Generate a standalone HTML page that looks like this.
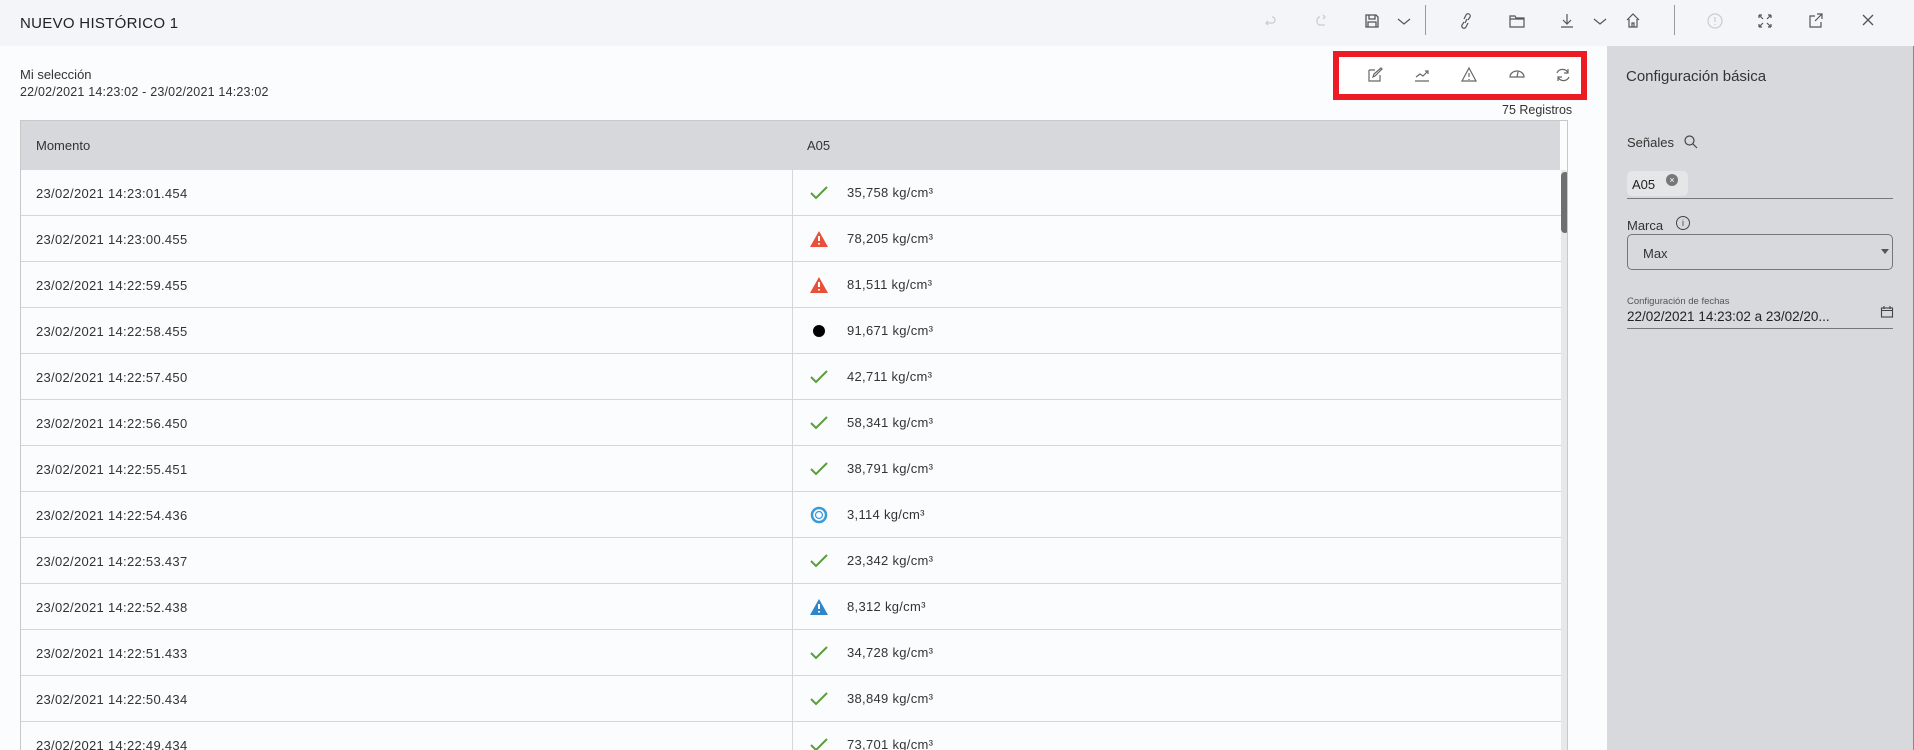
<!DOCTYPE html>
<html><head><meta charset="utf-8">
<style>
*{box-sizing:border-box;margin:0;padding:0}
html{width:1914px;height:750px;overflow:hidden}
body{width:1914px;height:750px;overflow:hidden;background:#fbfcfe;font-family:"Liberation Sans",sans-serif;color:#333;position:relative}
.hdr{position:absolute;left:0;top:0;width:1914px;height:46px;background:#f4f5f8}
.title{position:absolute;left:20px;top:15px;font-size:15px;color:#222;letter-spacing:.3px}
.ic{position:absolute;top:11px}
.sep{position:absolute;top:5px;width:1px;height:30px;background:#999}
.abs{position:absolute}
.right{position:absolute;left:1607px;top:46px;width:307px;height:704px;background:#d8d9dc;border-right:1px solid #888}
.red{position:absolute;left:1333px;top:51px;width:254px;height:49px;border:6px solid #ed1c24;background:#fff}
.tbl{position:absolute;left:20px;top:120px;width:1548px;height:630px;border:1px solid #c8c8c8;border-bottom:none;background:#fbfcfe;overflow:hidden}
.th{position:absolute;left:0;top:0;width:1540px;height:49px;background:#d7d8db}
.row{position:absolute;left:0;width:1540px;height:46px;border-bottom:1px solid #d6d6d8;font-size:13px;letter-spacing:.3px;color:#333}
.row .t{position:absolute;left:15px;top:16px}
.row .v{position:absolute;left:826px;top:15px}
.row .i{position:absolute;left:787px;top:12px;width:22px;height:22px}
.vl{position:absolute;left:771px;top:49px;width:1px;height:600px;background:#d6d6d8}
</style></head><body>
<div class="hdr">
<div class="title">NUEVO HISTÓRICO 1</div>
<svg class="ic" style="left:1262px" width="18" height="20" viewBox="0 0 18 20" fill="none" stroke="#ccc" stroke-width="1.3"><path d="M10 6 C14 6 14 12 10 12 H4 M6 10 L4 12 L6 14"/></svg>
<svg class="ic" style="left:1312px" width="18" height="20" viewBox="0 0 18 20" fill="none" stroke="#ccc" stroke-width="1.3"><path d="M8 6 C4 6 4 14 8 14 H13 M11 4 L13 6 L11 8"/></svg>
<svg class="ic" style="left:1363px" width="18" height="20" viewBox="0 0 18 20" fill="none" stroke="#555" stroke-width="1.3"><path d="M3 4 H13 L15 6 V16 H3 Z M6 4 V8 H12 V4 M5 16 V11 H13 V16"/></svg>
<svg class="ic" style="left:1396px" width="16" height="20" viewBox="0 0 16 20" fill="none" stroke="#555" stroke-width="1.2"><path d="M2 8 L8 13 L14 8"/></svg>
<div class="sep" style="left:1425px"></div>
<svg class="ic" style="left:1457px" width="18" height="20" viewBox="0 0 18 20" fill="none" stroke="#555" stroke-width="1.2"><path d="M7 11 L5 14 A2 2 0 0 0 9 16 L11 12 M11 9 L13 6 A2 2 0 0 0 9 4 L7 8 M8 12 L10 8"/></svg>
<svg class="ic" style="left:1508px" width="18" height="20" viewBox="0 0 18 20" fill="none" stroke="#555" stroke-width="1.2"><path d="M2 5 H7 L8 7 H16 V16 H2 Z M2 8 H16"/></svg>
<svg class="ic" style="left:1558px" width="18" height="20" viewBox="0 0 18 20" fill="none" stroke="#555" stroke-width="1.2"><path d="M9 3 V13 M5 9 L9 13 L13 9 M3 16 H15"/></svg>
<svg class="ic" style="left:1592px" width="16" height="20" viewBox="0 0 16 20" fill="none" stroke="#555" stroke-width="1.2"><path d="M2 8 L8 13 L14 8"/></svg>
<svg class="ic" style="left:1624px" width="18" height="20" viewBox="0 0 18 20" fill="none" stroke="#555" stroke-width="1.2"><path d="M3 9 L9 3 L15 9 M5 8 V16 H13 V8 M8 16 V12 H10 V16"/></svg>
<div class="sep" style="left:1674px"></div>
<svg class="ic" style="left:1706px" width="18" height="20" viewBox="0 0 18 20" fill="none" stroke="#ccc" stroke-width="1.2"><circle cx="9" cy="10" r="7"/><path d="M9 6 V11 M9 13 V14"/></svg>
<svg class="ic" style="left:1756px" width="18" height="20" viewBox="0 0 18 20" fill="none" stroke="#555" stroke-width="1.2"><path d="M3 4 L7 8 M3 4 H6 M3 4 V7 M15 4 L11 8 M15 4 H12 M15 4 V7 M3 16 L7 12 M3 16 H6 M3 16 V13 M15 16 L11 12 M15 16 H12 M15 16 V13"/></svg>
<svg class="ic" style="left:1807px" width="18" height="20" viewBox="0 0 18 20" fill="none" stroke="#555" stroke-width="1.2"><path d="M8 5 H3 V16 H14 V11 M10 3 H15 V8 M15 3 L8 10"/></svg>
<svg class="ic" style="left:1859px" width="18" height="20" viewBox="0 0 18 20" fill="none" stroke="#555" stroke-width="1.3"><path d="M4 4 L14 14 M14 4 L4 14"/></svg>
</div>

<div class="abs" style="left:20px;top:67px;font-size:13px;color:#333">Mi selección</div>
<div class="abs" style="left:20px;top:85px;font-size:12.5px;color:#333;letter-spacing:.2px">22/02/2021 14:23:02 - 23/02/2021 14:23:02</div>

<div class="red">
<svg class="abs" style="left:27px;top:9px" width="18" height="18" viewBox="0 0 18 18" fill="none" stroke="#666" stroke-width="1.2"><path d="M3 4 H9 M3 4 V15 H14 V9 M7 11 L8 8 L15 2 L16 3 L9 10 Z"/></svg>
<svg class="abs" style="left:74px;top:9px" width="18" height="18" viewBox="0 0 18 18" fill="none" stroke="#666" stroke-width="1.2"><path d="M3 11 L7 8 L10 10 L15 5 M12 5 H15 V8 M2 15 H16"/></svg>
<svg class="abs" style="left:121px;top:9px" width="18" height="18" viewBox="0 0 18 18" fill="none" stroke="#666" stroke-width="1.2"><path d="M9 2 L16 15 H2 Z M9 7 V11 M9 13 V14"/></svg>
<svg class="abs" style="left:169px;top:9px" width="18" height="18" viewBox="0 0 18 18" fill="none" stroke="#666" stroke-width="1.2"><path d="M2 11 A7 6 0 0 1 16 11 Z M9 11 L10 6"/></svg>
<svg class="abs" style="left:215px;top:9px" width="18" height="18" viewBox="0 0 18 18" fill="none" stroke="#666" stroke-width="1.2"><path d="M14 7 A6 6 0 0 0 3 7 M4 11 A6 6 0 0 0 15 11 M14 3 V7 H10 M4 15 V11 H8"/></svg>
</div>
<div class="abs" style="left:1502px;top:103px;font-size:12.5px;color:#333">75 Registros</div>

<div class="tbl">
<div class="th">
<div class="abs" style="left:15px;top:17px;font-size:13px;color:#333">Momento</div>
<div class="abs" style="left:786px;top:17px;font-size:13px;color:#333">A05</div>
<div class="abs" style="left:1539px;top:0;width:1px;height:49px;background:#fff"></div>
</div>
<div class="vl"></div>
<div id="rows"></div>
<div class="abs" style="left:1540px;top:49px;width:8px;height:600px;background:#e8e8e8"></div>
<div class="abs" style="left:1540px;top:51px;width:8px;height:61px;background:#6f6f6f;border-radius:4px"></div>
</div>

<div class="right">
<div class="abs" style="left:19px;top:22px;font-size:15px;color:#333">Configuración básica</div>
<div class="abs" style="left:20px;top:89px;font-size:13px;color:#333">Señales</div>
<svg class="abs" style="left:76px;top:88px" width="16" height="16" viewBox="0 0 16 16" fill="none" stroke="#444" stroke-width="1.2"><circle cx="6.5" cy="6.5" r="4.5"/><path d="M10 10 L14 14"/></svg>
<div class="abs" style="left:20px;top:125px;width:61px;height:25px;background:#e5e6e8;border-radius:5px"></div>
<div class="abs" style="left:25px;top:131px;font-size:13px;color:#222">A05</div>
<div class="abs" style="left:59px;top:128px;width:12px;height:12px;border-radius:50%;background:#777;color:#fff;font-size:9px;line-height:12px;text-align:center">×</div>
<div class="abs" style="left:20px;top:152px;width:266px;height:1px;background:#777"></div>
<div class="abs" style="left:20px;top:172px;font-size:13px;color:#333">Marca</div>
<div class="abs" style="left:69px;top:170px;width:14px;height:14px;border:1px solid #444;border-radius:50%;font-size:9px;line-height:12px;text-align:center;color:#444">i</div>
<div class="abs" style="left:20px;top:188px;width:266px;height:36px;border:1px solid #777;border-radius:5px"></div>
<div class="abs" style="left:36px;top:200px;font-size:13px;color:#333">Max</div>
<div class="abs" style="left:274px;top:203px;width:0;height:0;border-left:4px solid transparent;border-right:4px solid transparent;border-top:5px solid #555"></div>
<div class="abs" style="left:20px;top:250px;font-size:9.5px;color:#555">Configuración de fechas</div>
<div class="abs" style="left:20px;top:263px;font-size:13.5px;color:#222">22/02/2021 14:23:02 a 23/02/20...</div>
<svg class="abs" style="left:273px;top:259px" width="14" height="14" viewBox="0 0 14 14" fill="none" stroke="#444" stroke-width="1.1"><rect x="1.5" y="3" width="11" height="9"/><path d="M1.5 5.5 H12.5 M4 1 V4 M10 1 V4"/></svg>
<div class="abs" style="left:20px;top:282px;width:266px;height:1px;background:#777"></div>
</div>

<script>
var d=[["23/02/2021 14:23:01.454","c","35,758"],["23/02/2021 14:23:00.455","r","78,205"],["23/02/2021 14:22:59.455","r","81,511"],["23/02/2021 14:22:58.455","d","91,671"],["23/02/2021 14:22:57.450","c","42,711"],["23/02/2021 14:22:56.450","c","58,341"],["23/02/2021 14:22:55.451","c","38,791"],["23/02/2021 14:22:54.436","o","3,114"],["23/02/2021 14:22:53.437","c","23,342"],["23/02/2021 14:22:52.438","b","8,312"],["23/02/2021 14:22:51.433","c","34,728"],["23/02/2021 14:22:50.434","c","38,849"],["23/02/2021 14:22:49.434","c","73,701"]];
var ic={c:'<path d="M3 11 L8 16 L19 5" fill="none" stroke="#5a9e3c" stroke-width="2"/>',
r:'<path d="M11 3 L20 19 H2 Z" fill="#e8503a"/><path d="M11 8 V13 M11 15 V16.5" stroke="#fff" stroke-width="2"/>',
b:'<path d="M11 3 L20 19 H2 Z" fill="#2e86c8"/><path d="M11 8 V13 M11 15 V16.5" stroke="#fff" stroke-width="2"/>',
d:'<circle cx="11" cy="11" r="6" fill="#000"/>',
o:'<circle cx="11" cy="11" r="7" fill="none" stroke="#3a9ad9" stroke-width="2.5"/><circle cx="11" cy="11" r="3.5" fill="none" stroke="#3a9ad9" stroke-width="1.2"/>'};
var h="";d.forEach(function(r,k){h+='<div class="row" style="top:'+(49+k*46)+'px"><div class="t">'+r[0]+'</div><svg class="i" viewBox="0 0 22 22">'+ic[r[1]]+'</svg><div class="v">'+r[2]+' kg/cm³</div></div>';});
document.getElementById("rows").innerHTML=h;
</script>
</body></html>
